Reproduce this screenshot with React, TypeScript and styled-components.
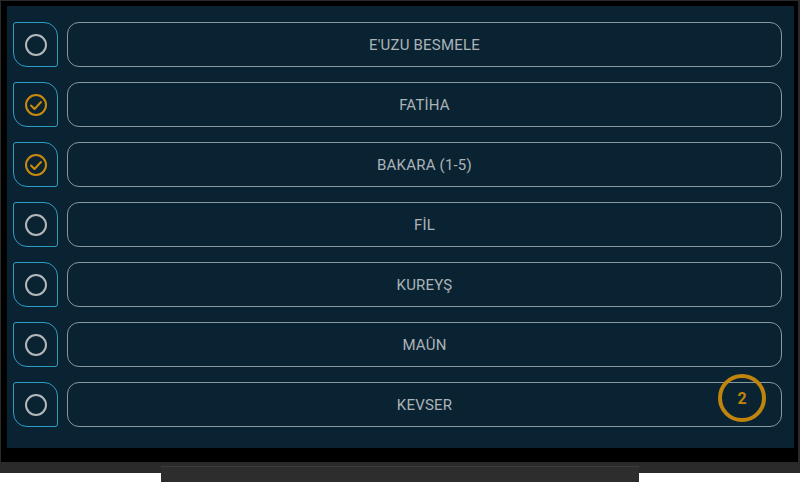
import React from "react";
import styled, { createGlobalStyle } from "styled-components";

const Global = createGlobalStyle`
  html, body { margin: 0; padding: 0; background: #ffffff; }
  body { font-family: Roboto, "Liberation Sans", sans-serif; }
`;

const Page = styled.div`
  width: 800px;
  height: 482px;
  display: flex;
  flex-direction: column;
  align-items: center;
  overflow: hidden;
`;

const Tv = styled.div`
  width: 800px;
  box-sizing: border-box;
  background: #2a2a2a;
  padding: 1px 2px 11px 1px;
`;

const Bezel = styled.div`
  background: #000;
  padding: 5px 4px 14px 6px;
`;

const Screen = styled.div`
  position: relative;
  height: 442px;
  box-sizing: border-box;
  background: #0a2332;
  padding: 16px 12px 0 6px;
  display: flex;
  flex-direction: column;
  gap: 15px;
`;

const Stand = styled.div`
  width: 478px;
  height: 16px;
  margin-top: -7px;
  background: #2d2d2d;
  border-top: 1px solid #3c3c3c;
  box-sizing: border-box;
`;

const Row = styled.div`
  display: flex;
  gap: 9px;
  height: 45px;
`;

const CheckBox = styled.div`
  width: 45px;
  height: 45px;
  box-sizing: border-box;
  border: 1px solid #2f9cc4;
  border-radius: 3px 14px 3px 14px;
  display: flex;
  align-items: center;
  justify-content: center;
  flex: none;
`;

const Item = styled.div`
  flex: 1;
  box-sizing: border-box;
  border: 1px solid #8b979e;
  border-radius: 12px;
  display: flex;
  align-items: center;
  justify-content: center;
  color: #abb3b8;
  font-size: 15px;
  letter-spacing: 0.2px;
`;

const Badge = styled.div`
  position: absolute;
  left: 711px;
  top: 368px;
  width: 48px;
  height: 48px;
  box-sizing: border-box;
  border: 4px solid #bf840c;
  border-radius: 50%;
  display: flex;
  align-items: center;
  justify-content: center;
  color: #bf840c;
  font-weight: 700;
  font-size: 16px;
`;

const Circle = () => (
  <svg width="24" height="24" viewBox="0 0 24 24">
    <circle cx="12" cy="12" r="10" fill="none" stroke="#b4b8ba" strokeWidth="2" />
  </svg>
);

const Checked = () => (
  <svg width="24" height="24" viewBox="0 0 24 24">
    <circle cx="12" cy="12" r="10" fill="none" stroke="#c98a0e" strokeWidth="2" />
    <path d="M7 12.5 L10.5 16 L17 9" fill="none" stroke="#c98a0e" strokeWidth="2" strokeLinecap="round" strokeLinejoin="round" />
  </svg>
);

const items: { label: string; checked: boolean }[] = [
  { label: "E'UZU BESMELE", checked: false },
  { label: "FATİHA", checked: true },
  { label: "BAKARA (1-5)", checked: true },
  { label: "FİL", checked: false },
  { label: "KUREYŞ", checked: false },
  { label: "MAÛN", checked: false },
  { label: "KEVSER", checked: false },
];

export default function App() {
  return (
    <>
      <Global />
      <Page>
        <Tv>
          <Bezel>
            <Screen>
              {items.map((it) => (
                <Row key={it.label}>
                  <CheckBox>{it.checked ? <Checked /> : <Circle />}</CheckBox>
                  <Item>{it.label}</Item>
                </Row>
              ))}
              <Badge>2</Badge>
            </Screen>
          </Bezel>
        </Tv>
        <Stand />
      </Page>
    </>
  );
}
